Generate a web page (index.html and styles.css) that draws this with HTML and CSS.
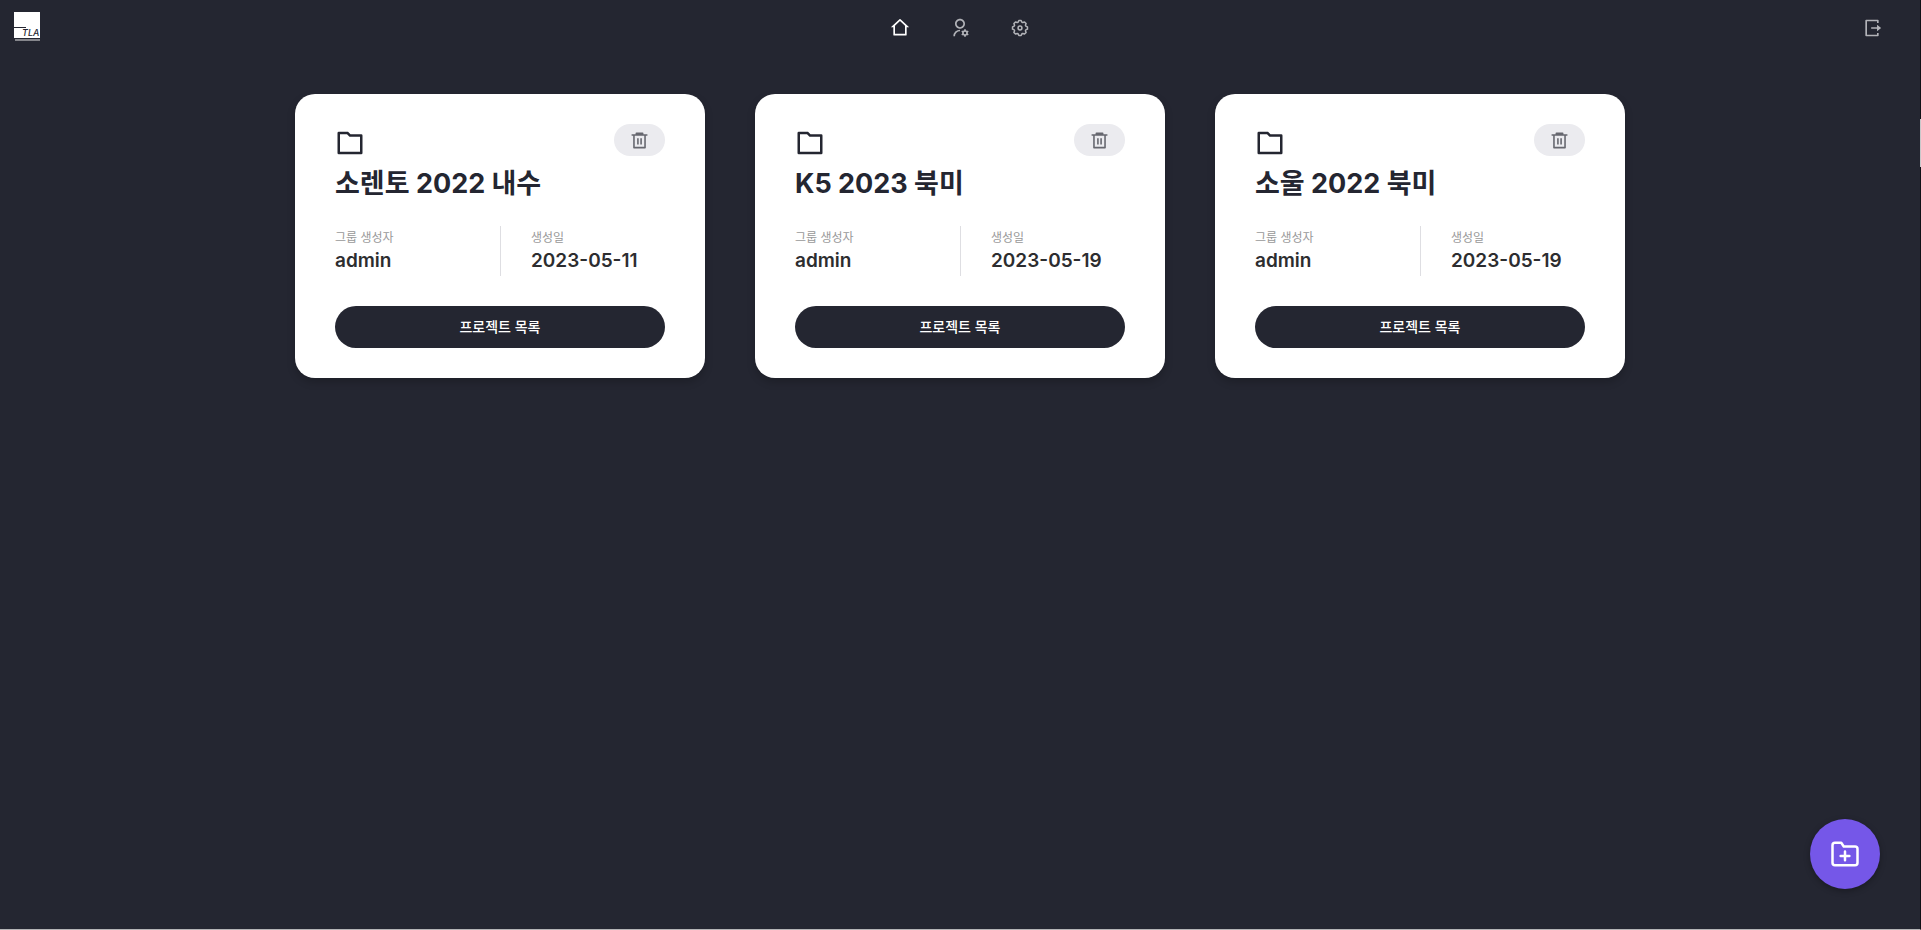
FILE: index.html
```
<!DOCTYPE html>
<html lang="ko">
<head>
    <meta charset="UTF-8">
    <meta name="viewport" content="width=device-width, initial-scale=1.0">
    <title>프로젝트 그룹</title>
    <link rel="stylesheet" href="styles.css">
</head>
<body>
    <!-- shared icons -->
    <svg class="sprite" aria-hidden="true">
        <symbol id="icon-folder" viewBox="0 0 24 24">
            <path d="M12.414 5H21a1 1 0 0 1 1 1v14a1 1 0 0 1-1 1H3a1 1 0 0 1-1-1V4a1 1 0 0 1 1-1h7.414l2 2zM4 5v14h16V7h-8.414l-2-2H4z"/>
        </symbol>
        <symbol id="icon-trash" viewBox="0 0 24 24">
            <path d="M17 4h5v2h-2v15a1 1 0 0 1-1 1H5a1 1 0 0 1-1-1V6H2V4h5V3a1 1 0 0 1 1-1h8a1 1 0 0 1 1 1v1zm1 2H6v14h12V6zM9 9h2v8H9V9zm4 0h2v8h-2V9z"/>
        </symbol>
    </svg>

    <header class="header">
        <a class="logo" href="#" aria-label="TLA">
            <svg viewBox="0 0 26 30">
                <rect class="logo-bg" width="26" height="26"/>
                <path class="logo-line" d="M0 15.500h12"/>
                <text class="logo-text" x="8" y="24">TLA</text>
                <path class="logo-base" d="M1 28h25"/>
            </svg>
        </a>

        <nav class="menu">
            <a class="menu-link active" href="#" aria-label="홈">
                <svg viewBox="0 0 24 24"><path d="M19 21H5a1 1 0 0 1-1-1v-9H1l10.327-9.388a1 1 0 0 1 1.346 0L23 11h-3v9a1 1 0 0 1-1 1zM6 19h12V9.157l-6-5.454-6 5.454V19z"/></svg>
            </a>
            <a class="menu-link" href="#" aria-label="사용자 관리">
                <svg viewBox="0 0 24 24"><path d="M12 14v2a6 6 0 0 0-6 6H4a8 8 0 0 1 8-8zm0-1c-3.315 0-6-2.685-6-6s2.685-6 6-6 6 2.685 6 6-2.685 6-6 6zm0-2c2.210 0 4-1.790 4-4s-1.790-4-4-4-4 1.790-4 4 1.790 4 4 4zm2.595 7.811a3.510 3.510 0 0 1 0-1.622l-.992-.573 1-1.732.992.573A3.496 3.496 0 0 1 17 14.645V13.500h2v1.145c.532.158 1.012.440 1.405.812l.992-.573 1 1.732-.992.573a3.510 3.510 0 0 1 0 1.622l.992.573-1 1.732-.992-.573a3.496 3.496 0 0 1-1.405.812V22.500h-2v-1.145a3.496 3.496 0 0 1-1.405-.812l-.992.573-1-1.732.992-.573zM18 19.500a1.500 1.500 0 1 0 0-3 1.500 1.500 0 0 0 0 3z"/></svg>
            </a>
            <a class="menu-link" href="#" aria-label="설정">
                <svg class="line-icon" viewBox="-1 -1 26 26">
                    <path d="M9.500 4.500 10.500 2.300h3l1 2.200 1.100.450 2.250-.850 2.050 2.050-.850 2.250.450 1.100 2.200 1v3l-2.200 1-.450 1.100.850 2.250-2.050 2.050-2.250-.850-1.100.450-1 2.200h-3l-1-2.200-1.100-.450-2.250.850-2.050-2.050.850-2.250-.450-1.100-2.200-1v-3l2.200-1 .450-1.100-.850-2.250 2.050-2.050 2.250.850z"/>
                    <circle cx="12" cy="12" r="2.500"/>
                </svg>
            </a>
        </nav>

        <a class="menu-link logout" href="#" aria-label="로그아웃">
            <svg viewBox="0 0 24 24"><path d="M5 22a1 1 0 0 1-1-1V3a1 1 0 0 1 1-1h14a1 1 0 0 1 1 1v3h-2V4H6v16h12v-2h2v3a1 1 0 0 1-1 1H5zm13-6v-3h-7v-2h7V8l5 4-5 4z"/></svg>
        </a>
    </header>

    <main class="groups">
        <article class="card">
            <div class="card-top">
                <svg class="folder"><use href="#icon-folder"/></svg>
                <button class="delete" type="button" aria-label="삭제"><svg><use href="#icon-trash"/></svg></button>
            </div>
            <h2 class="title">소렌토 2022 내수</h2>
            <dl class="info">
                <div class="info-item">
                    <dt>그룹 생성자</dt>
                    <dd>admin</dd>
                </div>
                <div class="info-item">
                    <dt>생성일</dt>
                    <dd>2023-05-11</dd>
                </div>
            </dl>
            <button class="list-button" type="button">프로젝트 목록</button>
        </article>

        <article class="card">
            <div class="card-top">
                <svg class="folder"><use href="#icon-folder"/></svg>
                <button class="delete" type="button" aria-label="삭제"><svg><use href="#icon-trash"/></svg></button>
            </div>
            <h2 class="title">K5 2023 북미</h2>
            <dl class="info">
                <div class="info-item">
                    <dt>그룹 생성자</dt>
                    <dd>admin</dd>
                </div>
                <div class="info-item">
                    <dt>생성일</dt>
                    <dd>2023-05-19</dd>
                </div>
            </dl>
            <button class="list-button" type="button">프로젝트 목록</button>
        </article>

        <article class="card">
            <div class="card-top">
                <svg class="folder"><use href="#icon-folder"/></svg>
                <button class="delete" type="button" aria-label="삭제"><svg><use href="#icon-trash"/></svg></button>
            </div>
            <h2 class="title">소울 2022 북미</h2>
            <dl class="info">
                <div class="info-item">
                    <dt>그룹 생성자</dt>
                    <dd>admin</dd>
                </div>
                <div class="info-item">
                    <dt>생성일</dt>
                    <dd>2023-05-19</dd>
                </div>
            </dl>
            <button class="list-button" type="button">프로젝트 목록</button>
        </article>
    </main>

    <button class="add-button" type="button" aria-label="그룹 추가">
        <svg viewBox="0 0 24 24">
            <path d="M22 19a2 2 0 0 1-2 2H4a2 2 0 0 1-2-2V5a2 2 0 0 1 2-2h5l2 3h9a2 2 0 0 1 2 2z"/>
            <path d="M12 10v7M8.500 13.500h7"/>
        </svg>
    </button>
</body>
</html>
```
FILE: styles.css
```
* {
    box-sizing: border-box;
}
body {
    font-family: Inter, "Noto Sans CJK KR", sans-serif;
    margin: 0;
    min-height: 100vh;
    background-color: #242631;
    color: #242631;
    border-right: 1px solid #101116;
    border-bottom: 1px solid #b4b4b6;
}
/* light strip on the right edge */
body::after {
    content: "";
    position: absolute;
    top: 119px;
    right: 0;
    width: 1px;
    height: 48px;
    background-color: #c8c8ca;
}
svg {
    display: block;
    fill: currentColor;
}
button {
    border: none;
    padding: 0;
    font-family: inherit;
    cursor: pointer;
}
.sprite {
    position: absolute;
    width: 0;
    height: 0;
}

.header {
    display: grid;
    grid-template-columns: 1fr auto 1fr;
    align-items: center;
    height: 54px;
    padding: 0 38px 0 14px;
}
.logo {
    justify-self: start;
}
.logo svg {
    width: 26px;
    height: 30px;
}
.logo-bg {
    fill: #fff;
}
.logo-line {
    stroke: #242631;
}
.logo-base {
    stroke: #85868c;
    stroke-width: 2;
}
.logo-text {
    fill: #242631;
    font-size: 9px;
    font-style: italic;
    font-weight: 500;
}
.menu {
    display: flex;
    gap: 40px;
    padding-left: 24px; /* evens out the header side paddings */
}
.menu-link {
    padding-top: 1px;
    color: #b2b3b8;
}
.menu-link svg {
    width: 20px;
    height: 20px;
}
.menu-link.active {
    color: #fff;
}
.line-icon {
    fill: none;
    stroke: currentColor;
    stroke-width: 2;
    stroke-linejoin: round;
}
.logout {
    justify-self: end;
}

.groups {
    display: flex;
    flex-wrap: wrap;
    justify-content: center;
    gap: 50px;
    padding: 40px;
}
.card {
    width: 410px;
    padding: 30px 40px;
    background-color: #fff;
    border-radius: 20px;
    box-shadow: 0 4px 8px rgba(0, 0, 0, 0.2);
}
.card-top {
    display: flex;
    justify-content: space-between;
    height: 34px;
}
.folder {
    width: 30px;
    height: 30px;
    align-self: flex-end;
}
.delete {
    height: 32px;
    padding: 0 16px;
    border-radius: 16px;
    background-color: #ebebef;
    color: #66676f;
}
.delete svg {
    width: 19px;
    height: 19px;
}
.title {
    margin: 9px 0 25px;
    font-size: 27px;
    line-height: 34px;
    font-weight: 700;
}
.info {
    display: grid;
    grid-template-columns: 1fr 1fr;
    margin: 0 0 30px;
}
.info-item {
    height: 50px;
    padding-top: 1px;
}
.info-item + .info-item {
    padding-left: 30px;
    border-left: 1px solid #dedee2;
}
.info dt {
    font-size: 12px;
    line-height: 22px;
    color: #999;
}
.info dd {
    margin: 0;
    font-size: 19px;
    line-height: 24px;
    font-weight: 600;
    color: #2d2d2f;
}
.list-button {
    display: block;
    width: 100%;
    height: 42px;
    padding-bottom: 2px;
    border-radius: 21px;
    background-color: #242631;
    color: #fff;
    font-size: 14px;
    font-weight: 500;
}

.add-button {
    position: fixed;
    right: 41px;
    bottom: 41px;
    display: flex;
    align-items: center;
    justify-content: center;
    width: 70px;
    height: 70px;
    border-radius: 50%;
    background-color: #7557e8;
    color: #fff;
    box-shadow: 0 2px 6px rgba(0, 0, 0, 0.3);
}
.add-button svg {
    width: 30px;
    height: 30px;
    fill: none;
    stroke: currentColor;
    stroke-width: 2;
    stroke-linecap: round;
    stroke-linejoin: round;
}
```
